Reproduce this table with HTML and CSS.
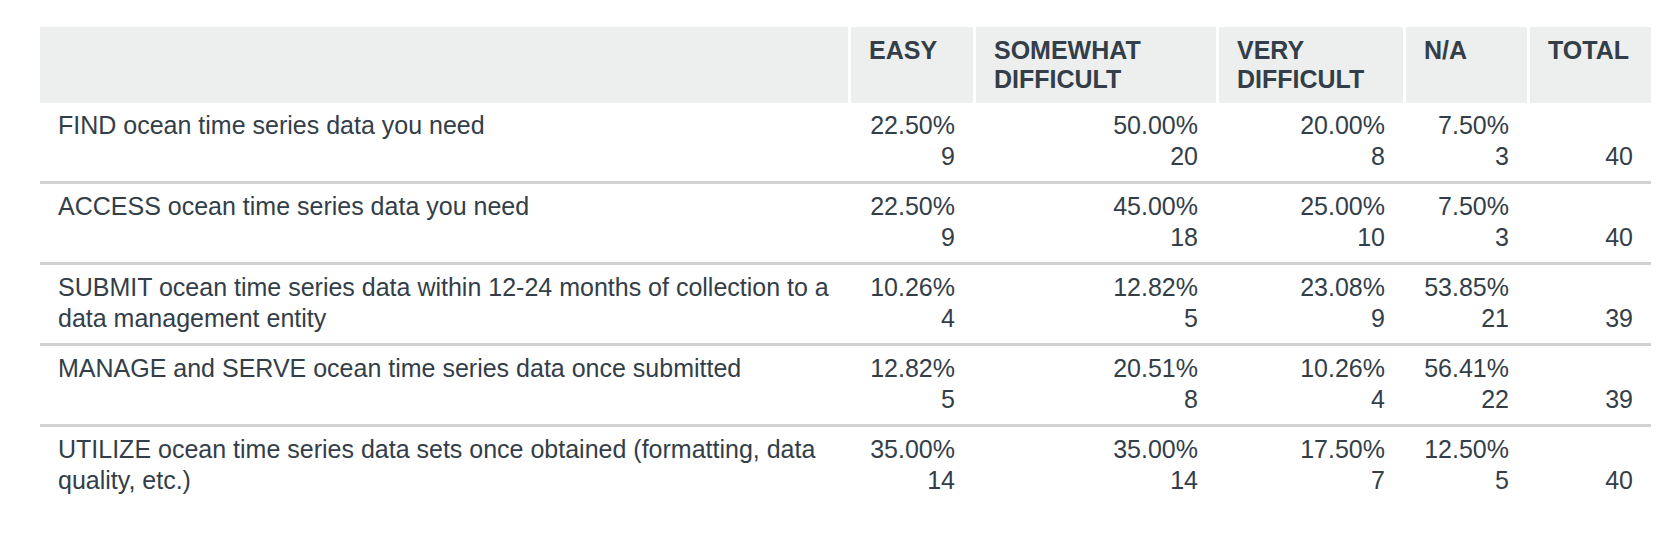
FILE: index.html
```html
<!DOCTYPE html>
<html lang="en">
<head>
<meta charset="utf-8">
<title>Survey results</title>
<link rel="stylesheet" href="styles.css">
</head>
<body>
<div class="page">
<table class="survey">
  <colgroup>
    <col class="c-q"><col class="c-easy"><col class="c-some"><col class="c-very"><col class="c-na"><col class="c-total">
  </colgroup>
  <thead>
    <tr>
      <th></th>
      <th>EASY</th>
      <th>SOMEWHAT DIFFICULT</th>
      <th>VERY DIFFICULT</th>
      <th>N/A</th>
      <th class="last">TOTAL</th>
    </tr>
  </thead>
  <tbody>
    <tr>
      <td class="q">FIND ocean time series data you need</td>
      <td class="n"><div>22.50%</div><div>9</div></td>
      <td class="n"><div>50.00%</div><div>20</div></td>
      <td class="n"><div>20.00%</div><div>8</div></td>
      <td class="n"><div>7.50%</div><div>3</div></td>
      <td class="n last"><div>&nbsp;</div><div>40</div></td>
    </tr>
    <tr>
      <td class="q">ACCESS ocean time series data you need</td>
      <td class="n"><div>22.50%</div><div>9</div></td>
      <td class="n"><div>45.00%</div><div>18</div></td>
      <td class="n"><div>25.00%</div><div>10</div></td>
      <td class="n"><div>7.50%</div><div>3</div></td>
      <td class="n last"><div>&nbsp;</div><div>40</div></td>
    </tr>
    <tr>
      <td class="q">SUBMIT ocean time series data within 12-24 months of collection to a data management entity</td>
      <td class="n"><div>10.26%</div><div>4</div></td>
      <td class="n"><div>12.82%</div><div>5</div></td>
      <td class="n"><div>23.08%</div><div>9</div></td>
      <td class="n"><div>53.85%</div><div>21</div></td>
      <td class="n last"><div>&nbsp;</div><div>39</div></td>
    </tr>
    <tr>
      <td class="q">MANAGE and SERVE ocean time series data once submitted</td>
      <td class="n"><div>12.82%</div><div>5</div></td>
      <td class="n"><div>20.51%</div><div>8</div></td>
      <td class="n"><div>10.26%</div><div>4</div></td>
      <td class="n"><div>56.41%</div><div>22</div></td>
      <td class="n last"><div>&nbsp;</div><div>39</div></td>
    </tr>
    <tr class="final">
      <td class="q">UTILIZE ocean time series data sets once obtained (formatting, data quality, etc.)</td>
      <td class="n"><div>35.00%</div><div>14</div></td>
      <td class="n"><div>35.00%</div><div>14</div></td>
      <td class="n"><div>17.50%</div><div>7</div></td>
      <td class="n"><div>12.50%</div><div>5</div></td>
      <td class="n last"><div>&nbsp;</div><div>40</div></td>
    </tr>
  </tbody>
</table>
</div>
</body>
</html>
```

FILE: styles.css
```css
html, body {
  margin: 0;
  padding: 0;
  background: #ffffff;
}

.page {
  padding: 27px 0 0 40px;
}

.survey {
  table-layout: fixed;
  width: 1611px;
  border-collapse: separate;
  border-spacing: 0;
  font-family: "Liberation Sans", Arial, sans-serif;
  font-size: 25px;
  color: #333e48;
}

.c-q { width: 811px; }
.c-easy { width: 125px; }
.c-some { width: 243px; }
.c-very { width: 187px; }
.c-na { width: 124px; }
.c-total { width: 121px; }

.survey th {
  background: #edeeee;
  border-right: 3px solid #ffffff;
  padding: 9px 18px 9px 18px;
  line-height: 29px;
  font-weight: bold;
  text-align: left;
  vertical-align: top;
}

.survey th.last {
  border-right: 0;
}

.survey td {
  padding: 7px 21px 9px 18px;
  line-height: 31px;
  vertical-align: top;
  border-bottom: 3px solid #d2d2d2;
}

.survey td.q {
  text-align: left;
}

.survey td.n {
  padding-left: 4px;
  text-align: right;
}

.survey td.last {
  padding-right: 18px;
}

.survey tr.final td {
  border-bottom: 0;
}
```
